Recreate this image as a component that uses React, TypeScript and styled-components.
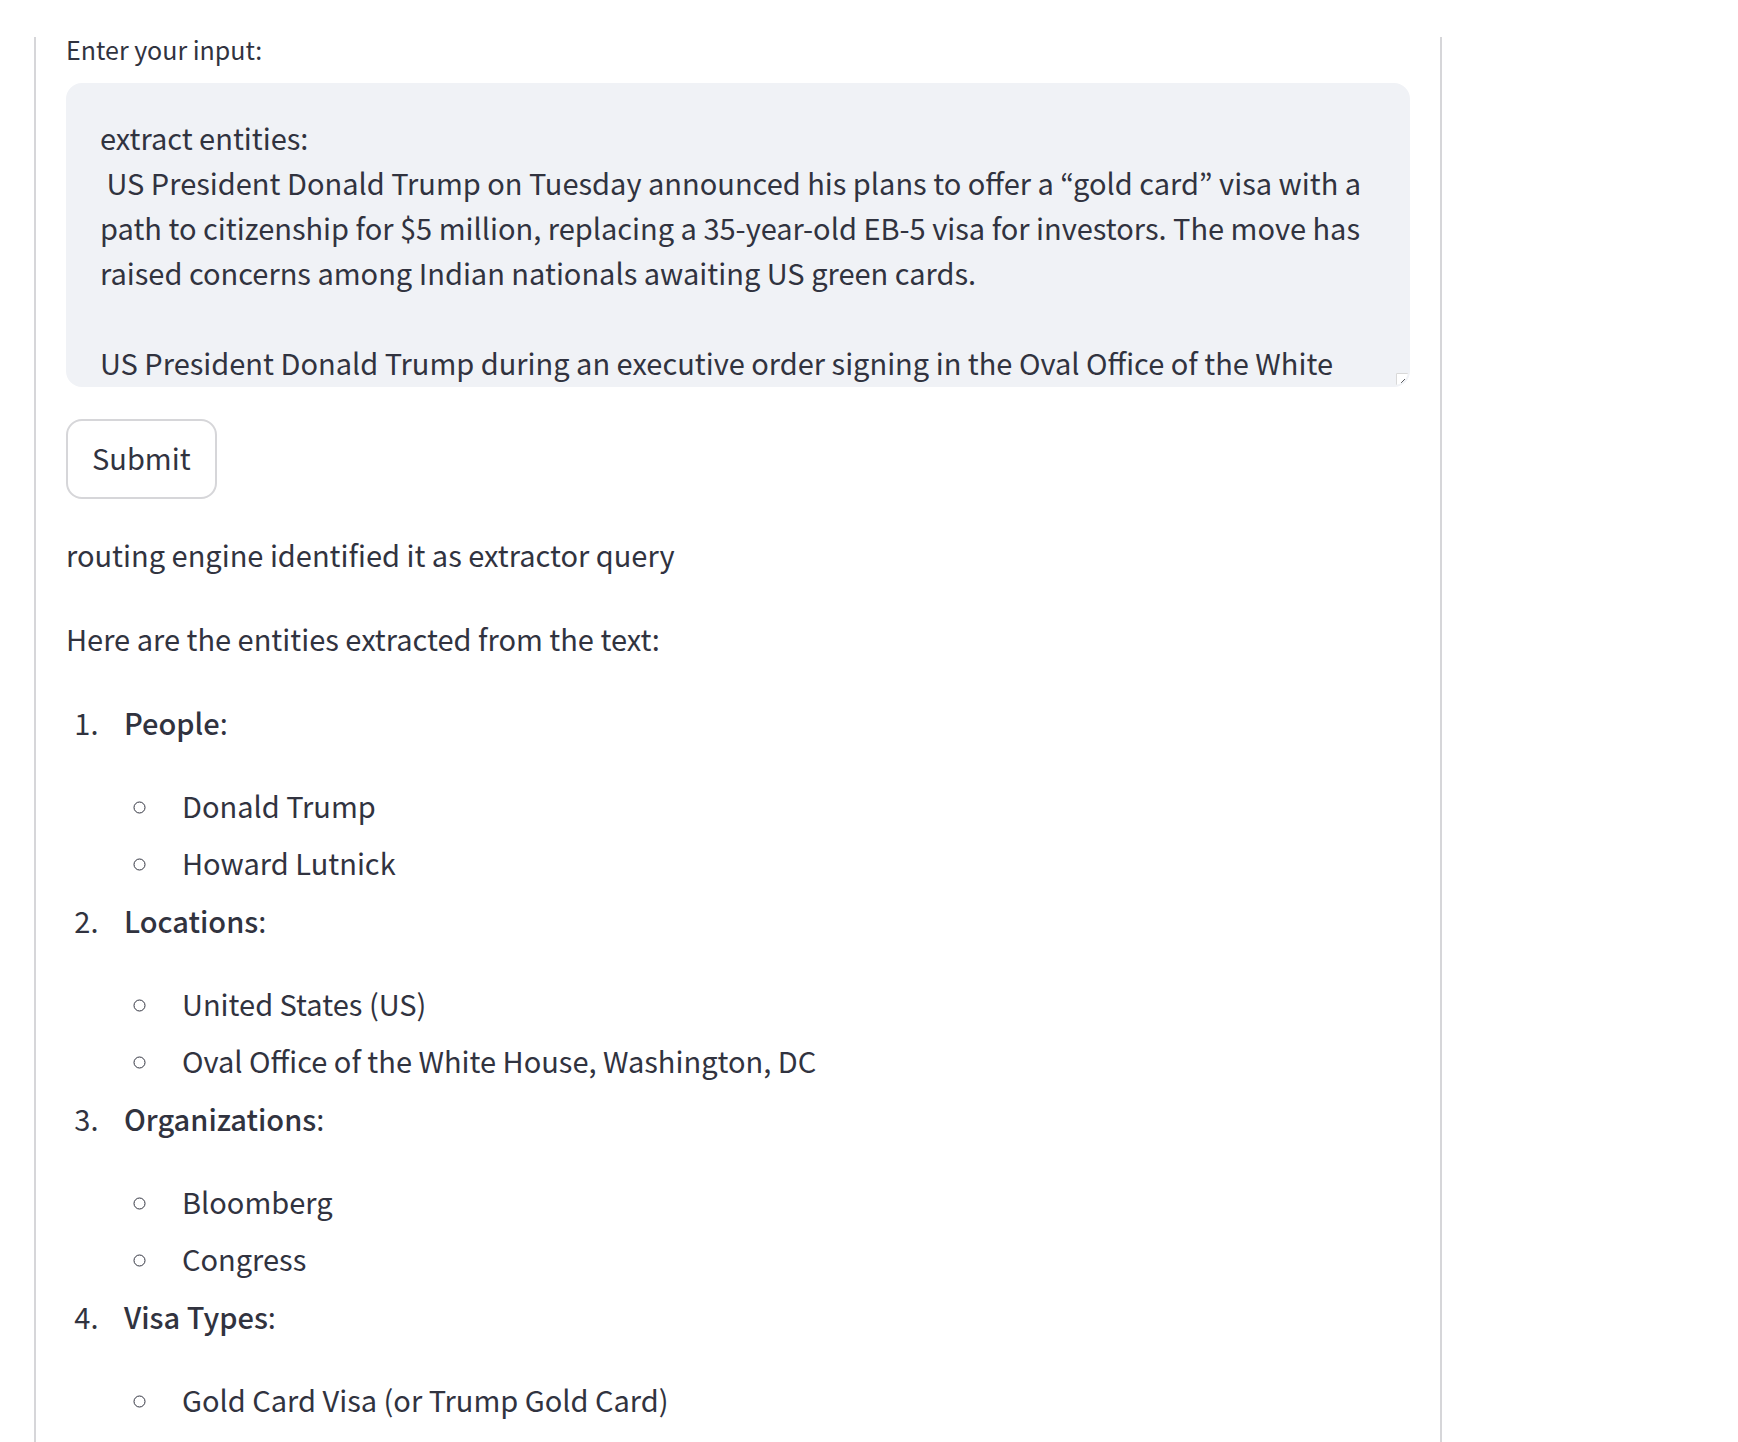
import React, { useState } from "react";
import styled, { createGlobalStyle } from "styled-components";

const GlobalStyle = createGlobalStyle`
  *, *::before, *::after { box-sizing: border-box; }
  html, body { height: 100%; }
  body {
    margin: 0;
    overflow: hidden;
    background: #ffffff;
    color: #31333f;
    font-family: "Noto Sans CJK KR", "Open Sans", sans-serif;
    font-size: 29px;
    line-height: 51px;
  }
`;

const Page = styled.main`
  padding: 37px 34px 0;
`;

const Form = styled.form`
  max-width: 88rem;
  padding: 0 30px 48px;
  border: 2px solid #d6d6d9;
  border-top: 0;
`;

const FieldLabel = styled.label`
  display: block;
  padding-bottom: 21px;
  font-size: 25px;
  line-height: 25px;
`;

const FieldBox = styled.div`
  position: relative;
  display: flex;
  height: 304px;
  margin-bottom: 32px;
  overflow: hidden;
  background: #f0f2f6;
  border: 2px solid #f0f2f6;
  border-radius: 16px;
`;

const TextArea = styled.textarea`
  flex: 1;
  padding: 30px 32px;
  border: 0;
  outline: 0;
  resize: none;
  overflow: auto;
  scrollbar-width: none;
  background: transparent;
  color: inherit;
  font: inherit;
  line-height: 45px;
`;

const Grip = styled.svg`
  position: absolute;
  right: 0;
  bottom: 0;
  width: 12px;
  height: 12px;
`;

const SubmitButton = styled.button`
  display: block;
  min-height: 80px;
  padding: 0 24px 4px;
  border: 2px solid #d6d6d9;
  border-radius: 16px;
  background: #ffffff;
  color: inherit;
  font: inherit;
  cursor: pointer;
`;

const Answer = styled.section`
  display: flex;
  flex-direction: column;
  gap: 33px;
  padding-top: 30px;
`;

const Paragraph = styled.p`
  margin: 0;
`;

const Sections = styled.ol`
  display: flex;
  flex-direction: column;
  gap: 7px;
  margin: 0;
  padding: 0;
`;

const Items = styled.ul`
  display: flex;
  flex-direction: column;
  gap: 6px;
  margin: 32px 0 0;
  padding: 0;
  list-style: circle;
`;

const ListItem = styled.li`
  margin-left: 39px;
  padding-left: 19px;
`;

const Strong = styled.strong`
  font-weight: 500;
`;

const initialText = `extract entities:
 US President Donald Trump on Tuesday announced his plans to offer a “gold card” visa with a path to citizenship for $5 million, replacing a 35-year-old EB-5 visa for investors. The move has raised concerns among Indian nationals awaiting US green cards.

US President Donald Trump during an executive order signing in the Oval Office of the White`;

const groups = [
  { title: "People", items: ["Donald Trump", "Howard Lutnick"] },
  {
    title: "Locations",
    items: ["United States (US)", "Oval Office of the White House, Washington, DC"],
  },
  { title: "Organizations", items: ["Bloomberg", "Congress"] },
  { title: "Visa Types", items: ["Gold Card Visa (or Trump Gold Card)"] },
];

export default function App() {
  const [text, setText] = useState(initialText);

  return (
    <>
      <GlobalStyle />
      <Page>
        <Form onSubmit={(e: React.FormEvent) => e.preventDefault()}>
          <FieldLabel htmlFor="query">Enter your input:</FieldLabel>
          <FieldBox>
            <TextArea
              id="query"
              spellCheck={false}
              value={text}
              onChange={(e) => setText(e.target.value)}
            />
            <Grip viewBox="0 0 12 12" aria-hidden="true">
              <path d="M0 0H12V5Q10 10 5 12H0Z" fill="#ffffff" />
              <path d="M0.5 12V0.5H12" fill="none" stroke="#d9d9d9" />
              <path d="M5 10L9 6" fill="none" stroke="#55575c" />
            </Grip>
          </FieldBox>
          <SubmitButton type="submit">Submit</SubmitButton>
          <Answer>
            <Paragraph>routing engine identified it as extractor query</Paragraph>
            <Paragraph>Here are the entities extracted from the text:</Paragraph>
            <Sections>
              {groups.map((group) => (
                <ListItem key={group.title}>
                  <Strong>{group.title}</Strong>:
                  <Items>
                    {group.items.map((item) => (
                      <ListItem key={item}>{item}</ListItem>
                    ))}
                  </Items>
                </ListItem>
              ))}
            </Sections>
          </Answer>
        </Form>
      </Page>
    </>
  );
}
